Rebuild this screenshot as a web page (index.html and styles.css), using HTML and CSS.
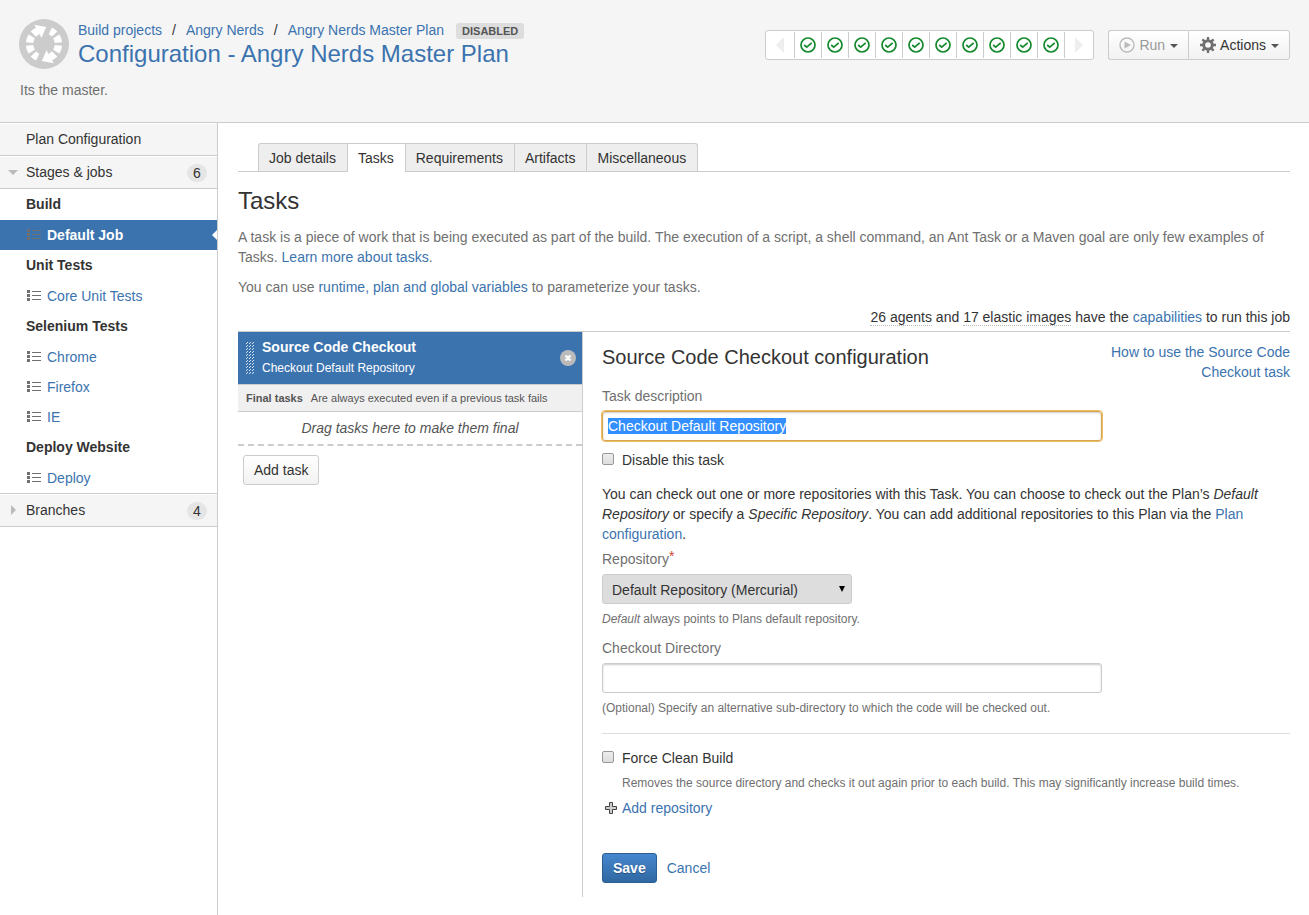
FILE: index.html
```html
<!DOCTYPE html>
<html lang="en">
<head>
<meta charset="utf-8">
<title>Configuration - Angry Nerds Master Plan</title>
<link rel="stylesheet" href="styles.css">
</head>
<body>
<svg class="defs" aria-hidden="true">
  <symbol id="ok" viewBox="0 0 16 16"><circle cx="8" cy="8" r="7" fill="none" stroke="#14892c" stroke-width="1.7"/><path d="M4.2 8l2.5 2.2 5-4.4" fill="none" stroke="#14892c" stroke-width="1.7"/></symbol>
  <symbol id="list" viewBox="0 0 14 11"><path d="M0 0h3v3H0zM0 4h3v3H0zM0 8h3v3H0zM5 1h9v1H5zM5 5h9v1H5zM5 9h9v1H5z" fill="#707070"/></symbol>
</svg>
<header class="header">
  <div class="header-main">
    <svg class="logo" viewBox="0 0 50 50" aria-hidden="true">
      <circle cx="25" cy="25" r="25" fill="#ccc"/>
      <g id="half">
        <path d="M31.3 11.9A14.5 14.5 0 0 1 35.6 15.1M37.3 17.4A14.5 14.5 0 0 1 39.4 23.6M39.4 26.4A14.5 14.5 0 0 1 37.3 32.6M35.6 34.9A14.5 14.5 0 0 1 31 38.2" fill="none" stroke="#fff" stroke-width="7.4"/>
        <path d="M27.5 31.2L22.8 42l11.9 2.2z" fill="#fff"/>
      </g>
      <use href="#half" transform="rotate(180 25 25)"/>
    </svg>
    <div class="titles">
      <nav class="crumbs"><a href="#">Build projects</a><span>/</span><a href="#">Angry Nerds</a><span>/</span><a href="#">Angry Nerds Master Plan</a><strong class="lozenge">DISABLED</strong></nav>
      <h1><a href="#">Configuration - Angry Nerds Master Plan</a></h1>
    </div>
    <div class="history">
      <span class="end"><svg width="8" height="16"><path d="M8 0v16L0 8z" fill="#eee"/></svg></span>
      <a href="#" aria-label="Successful build"><svg><use href="#ok"/></svg></a>
      <a href="#" aria-label="Successful build"><svg><use href="#ok"/></svg></a>
      <a href="#" aria-label="Successful build"><svg><use href="#ok"/></svg></a>
      <a href="#" aria-label="Successful build"><svg><use href="#ok"/></svg></a>
      <a href="#" aria-label="Successful build"><svg><use href="#ok"/></svg></a>
      <a href="#" aria-label="Successful build"><svg><use href="#ok"/></svg></a>
      <a href="#" aria-label="Successful build"><svg><use href="#ok"/></svg></a>
      <a href="#" aria-label="Successful build"><svg><use href="#ok"/></svg></a>
      <a href="#" aria-label="Successful build"><svg><use href="#ok"/></svg></a>
      <a href="#" aria-label="Successful build"><svg><use href="#ok"/></svg></a>
      <span class="end"><svg width="8" height="16"><path d="M0 0v16l8-8z" fill="#eee"/></svg></span>
    </div>
    <div class="actions">
      <button class="button" type="button" disabled><svg width="16" height="16" viewBox="0 0 16 16"><circle cx="8" cy="8" r="7" fill="none" stroke="#bbb" stroke-width="1.4"/><path d="M5.5 4.5v7L12 8z" fill="#bbb"/></svg>Run<i class="caret"></i></button>
      <button class="button" type="button"><svg width="16" height="16" viewBox="0 0 16 16"><circle cx="8" cy="8" r="4.3" fill="none" stroke="#707070" stroke-width="3"/><path id="teeth" d="M6.8 0h2.4v3H6.8zM6.8 13h2.4v3H6.8zM0 6.8h3v2.4H0zM13 6.8h3v2.4h-3z" fill="#707070"/><use href="#teeth" transform="rotate(45 8 8)"/></svg>Actions<i class="caret"></i></button>
    </div>
  </div>
  <p class="about">Its the master.</p>
</header>
<div class="page">
  <nav class="sidebar">
    <h2 class="section">Plan Configuration</h2>
    <h2 class="section"><i class="arrow down"></i>Stages &amp; jobs<span class="badge">6</span></h2>
    <h3>Build</h3>
    <a class="job current" href="#"><svg><use href="#list"/></svg>Default Job</a>
    <h3>Unit Tests</h3>
    <a class="job" href="#"><svg><use href="#list"/></svg>Core Unit Tests</a>
    <h3>Selenium Tests</h3>
    <a class="job" href="#"><svg><use href="#list"/></svg>Chrome</a>
    <a class="job" href="#"><svg><use href="#list"/></svg>Firefox</a>
    <a class="job" href="#"><svg><use href="#list"/></svg>IE</a>
    <h3>Deploy Website</h3>
    <a class="job" href="#"><svg><use href="#list"/></svg>Deploy</a>
    <h2 class="section last"><i class="arrow right"></i>Branches<span class="badge">4</span></h2>
  </nav>
  <main class="content">
    <nav class="tabs">
      <a href="#">Job details</a><a class="active" href="#">Tasks</a><a href="#">Requirements</a><a href="#">Artifacts</a><a href="#">Miscellaneous</a>
    </nav>
    <h2 class="title">Tasks</h2>
    <p class="intro">A task is a piece of work that is being executed as part of the build. The execution of a script, a shell command, an Ant Task or a Maven goal are only few examples of Tasks. <a href="#">Learn more about tasks</a>.</p>
    <p class="intro">You can use <a href="#">runtime, plan and global variables</a> to parameterize your tasks.</p>
    <p class="agents"><span>26 agents</span> and <span>17 elastic images</span> have the <a href="#">capabilities</a> to run this job</p>
    <div class="editor">
      <section class="tasks">
        <div class="task">
          <svg class="grip" width="8" height="32" aria-hidden="true"><defs><pattern id="dots" width="3" height="3" patternUnits="userSpaceOnUse"><path d="M1 0h1v1H1zM0 1h1v1H0z" fill="#d5e0ec"/></pattern></defs><rect width="8" height="32" fill="url(#dots)"/></svg>
          <div class="task-text"><strong>Source Code Checkout</strong><small>Checkout Default Repository</small></div>
          <button class="remove" type="button" aria-label="Remove task"><svg width="16" height="16"><circle cx="8" cy="8" r="8" fill="#bbb"/><path d="M5.5 5.5l5 5M10.5 5.5l-5 5" stroke="#fff" stroke-width="2.4"/></svg></button>
        </div>
        <p class="final"><strong>Final tasks</strong>Are always executed even if a previous task fails</p>
        <p class="drop">Drag tasks here to make them final</p>
        <button class="button add" type="button">Add task</button>
      </section>
      <form class="config">
        <div class="config-head">
          <h2>Source Code Checkout configuration</h2>
          <a href="#">How to use the Source Code Checkout task</a>
        </div>
        <label class="label" for="description">Task description</label>
        <input class="text" id="description" type="text" value="Checkout Default Repository">
        <div class="check"><input type="checkbox" id="disable"><label for="disable">Disable this task</label></div>
        <p class="help">You can check out one or more repositories with this Task. You can choose to check out the Plan’s <em>Default Repository</em> or specify a <em>Specific Repository</em>. You can add additional repositories to this Plan via the <a href="#">Plan configuration</a>.</p>
        <label class="label" for="repository">Repository<span class="required">*</span></label>
        <div class="select"><select id="repository"><option>Default Repository (Mercurial)</option></select></div>
        <p class="note"><em>Default</em> always points to Plans default repository.</p>
        <label class="label" for="directory">Checkout Directory</label>
        <input class="text" id="directory" type="text">
        <p class="note">(Optional) Specify an alternative sub-directory to which the code will be checked out.</p>
        <hr>
        <div class="check"><input type="checkbox" id="clean"><label for="clean">Force Clean Build</label></div>
        <p class="note indent">Removes the source directory and checks it out again prior to each build. This may significantly increase build times.</p>
        <a class="add-repo" href="#"><svg width="12" height="12"><path d="M4.5 .5h3v4h4v3h-4v4h-3v-4h-4v-3h4z" fill="#ccc" stroke="#444"/></svg>Add repository</a>
        <div class="submit"><button class="save" type="submit">Save</button><a href="#">Cancel</a></div>
      </form>
    </div>
  </main>
</div>
<script src="script.js"></script>
</body>
</html>
```
FILE: styles.css
```css
* { box-sizing: border-box; }
body { margin: 0; min-height: 100vh; display: flex; flex-direction: column; font: 14px/20px "Liberation Sans", Arial, sans-serif; color: #333; background: #fff; }
h1, h2, h3, p { margin: 0; font-weight: normal; }
a { color: #3b73af; text-decoration: none; }
button, input, select { font: inherit; color: inherit; margin: 0; }
.defs { position: absolute; width: 0; height: 0; }

.header { background: #f5f5f5; border-bottom: 1px solid #ccc; padding: 19px 19px 22px; }
.header-main { display: flex; align-items: flex-start; }
.logo { width: 50px; height: 50px; flex: none; }
.titles { flex: 1; padding: 1px 0 0 9px; }
.crumbs { display: flex; align-items: center; }
.crumbs span { padding: 0 10px; }
.lozenge { font-size: 11px; line-height: 16px; padding: 0 6px; margin: 1px 0 0 12px; background: #ddd; border-radius: 3px; color: #555; }
h1 { font-size: 24px; line-height: 28px; }
.about { color: #707070; margin-top: 11px; padding-left: 1px; }
.history { display: flex; margin: 11px 14px 0 0; height: 30px; background: #fff; border: 1px solid #ccc; border-radius: 3px; padding: 1px 0; }
.history > * { display: flex; align-items: center; justify-content: center; width: 27px; border-right: 1px solid #ccc; }
.history > :first-child { width: 29px; }
.history > :last-child { width: 28px; border: 0; }
.history a svg { width: 16px; height: 16px; }
.actions { display: flex; margin-top: 11px; }
.button { height: 30px; padding: 0 10px; display: flex; align-items: center; gap: 4px; border: 1px solid #ccc; border-radius: 3px; background: linear-gradient(#fff, #f2f2f2); }
.button:disabled { color: #999; }
.actions .button:first-child { border-radius: 3px 0 0 3px; border-right: 0; }
.actions .button:last-child { border-radius: 0 3px 3px 0; padding-left: 11px; }
.caret { border: 4px solid transparent; border-top-color: #555; border-bottom: 0; margin: 2px 0 0 1px; }

.page { display: flex; flex: 1; }
.sidebar { flex: none; width: 218px; border-right: 1px solid #ccc; }
.section { display: flex; align-items: center; height: 33px; padding: 0 10px 0 26px; font-size: 14px; line-height: 20px; background: #f5f5f5; border-bottom: 1px solid #ccc; box-shadow: inset 0 1px #fff; }
.section:has(.arrow) { padding-left: 8px; }
.last { height: 34px; border-top: 1px solid #ccc; }
.arrow { width: 18px; flex: none; }
.arrow::before { content: ""; display: block; width: 0; border: 5px solid transparent; }
.down::before { border-top-color: #bbb; border-bottom: 0; }
.right::before { border-left-color: #bbb; border-right: 0; margin-left: 3px; }
.badge { margin: 1px 0 0 auto; min-width: 20px; height: 18px; line-height: 18px; text-align: center; border-radius: 9px; background: #e5e5e5; }
.sidebar h3 { font-size: 14px; font-weight: bold; line-height: 20px; padding: 5px 26px 6px; }
.job { display: flex; align-items: center; gap: 6px; height: 30px; padding-left: 27px; }
.job svg { width: 14px; height: 11px; margin-bottom: 1px; }
.current { position: relative; background: #3b73af; color: #fff; font-weight: bold; }
.current::after { content: ""; position: absolute; right: 0; top: 10px; border: 5px solid transparent; border-right-color: #fff; border-left: 0; }

.content { flex: 1; min-width: 0; padding: 20px 19px 18px 20px; }
.tabs { display: flex; padding-left: 20px; border-bottom: 1px solid #ccc; }
.tabs a { color: #333; background: #eee; border: 1px solid #ccc; border-left-width: 0; border-bottom: 0; padding: 4px 11px 3px 10px; }
.tabs a:first-child { border-left-width: 1px; border-top-left-radius: 3px; }
.tabs a:last-child { border-top-right-radius: 3px; }
.tabs .active { background: #fff; margin-bottom: -1px; }
.title { font-size: 24px; line-height: 28px; margin: 15px 0 12px; }
.intro { color: #707070; margin-bottom: 10px; }
.agents { text-align: right; padding-bottom: 4px; border-bottom: 1px solid #ccc; }
.agents span { border-bottom: 1px dotted #bbb; }
.editor { display: flex; }
.tasks { flex: none; width: 345px; border-right: 1px solid #ccc; }
.task { display: flex; align-items: center; padding: 5px 6px 5px 8px; background: #3b73af; color: #fff; }
.grip { flex: none; }
.task-text { flex: 1; padding-left: 8px; display: grid; }
.task-text strong { line-height: 20px; }
.task-text small { font-size: 12px; line-height: 22px; }
.remove { padding: 0; border: 0; background: none; display: flex; }
.final { font-size: 11px; line-height: 26px; padding: 0 8px; color: #555; background: #f0f0f0; border: 1px solid #ccc; border-width: 1px 0; }
.final strong { margin-right: 8px; }
.drop { text-align: center; font-style: italic; color: #555; line-height: 32px; height: 34px; border-bottom: 2px dashed #ccc; }
.add { margin: 9px 5px; }
.config { flex: 1; min-width: 0; padding: 10px 0 14px 19px; }
.config-head { display: flex; justify-content: space-between; }
.config-head h2 { font-size: 20px; line-height: 30px; }
.config-head a { width: 200px; text-align: right; }
.label { display: block; color: #707070; margin: 4px 0 5px; }
.text { display: block; width: 500px; max-width: 100%; height: 30px; padding: 0 5px; border: 1px solid #ccc; border-radius: 3px; box-shadow: inset 0 1px 2px #ccc; background: #fff; }
.text:focus { border-color: #d9a54e; outline: 1px solid #efbd65; outline-offset: 0; }
.text::selection { background: #338fff; color: #fff; }
.check { display: flex; align-items: center; gap: 8px; margin: 9px 0 14px; }
.check input { appearance: none; width: 12px; height: 12px; margin-bottom: 2px; border: 1px solid #999; border-radius: 2px; background: linear-gradient(#eee, #ddd); }
.help { margin-bottom: 5px; }
.required { color: #d04437; vertical-align: 3px; line-height: 1; }
.select { position: relative; width: 250px; }
.select::after { content: ""; position: absolute; right: 7px; top: 12px; border: 3px solid transparent; border-top: 6px solid #000; border-bottom: 0; pointer-events: none; }
select { appearance: none; width: 100%; height: 30px; padding: 1px 9px 0; border: 1px solid #ccc; border-radius: 3px; background: #ddd; }
.note { font-size: 12px; line-height: 20px; color: #707070; margin: 5px 0 9px; }
hr { border: 0; border-top: 1px solid #ddd; margin: 15px 0 14px; }
hr + .check { margin-bottom: 5px; }
.indent { padding-left: 20px; margin-bottom: 5px; }
.add-repo { display: flex; align-items: center; gap: 5px; padding-left: 3px; }
.submit { display: flex; align-items: center; gap: 10px; margin-top: 35px; }
.save { height: 30px; padding: 0 10px; color: #fff; font-weight: bold; border: 1px solid #2a5d91; border-radius: 3px; background: linear-gradient(#4687ce, #3068a2); text-shadow: 0 1px #23507d; }
```
FILE: script.js
```js
const description = document.getElementById('description');
description.focus();
description.select();
```
